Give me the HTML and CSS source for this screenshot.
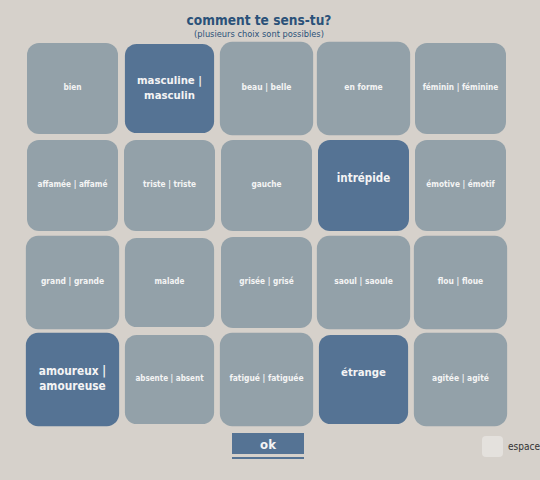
FILE: index.html
```html
<!DOCTYPE html>
<html lang="fr">
<head>
<meta charset="utf-8">
<title>comment te sens-tu?</title>
<link rel="stylesheet" href="styles.css">
</head>
<body>
<div class="page">
  <header class="head">
    <h1 class="title">comment te sens-tu?</h1>
    <p class="subtitle">(plusieurs choix sont possibles)</p>
  </header>
  <div class="grid">
    <div class="card">bien</div>
    <div class="card sel sm">masculine |<br>masculin</div>
    <div class="card lg">beau | belle</div>
    <div class="card lg">en forme</div>
    <div class="card">féminin | féminine</div>

    <div class="card">affamée | affamé</div>
    <div class="card">triste | triste</div>
    <div class="card">gauche</div>
    <div class="card sel single">intrépide</div>
    <div class="card">émotive | émotif</div>

    <div class="card lg">grand | grande</div>
    <div class="card sm">malade</div>
    <div class="card">grisée | grisé</div>
    <div class="card lg">saoul | saoule</div>
    <div class="card lg">flou | floue</div>

    <div class="card sel lg">amoureux |<br>amoureuse</div>
    <div class="card sm">absente | absent</div>
    <div class="card lg">fatigué | fatiguée</div>
    <div class="card sel sm single">étrange</div>
    <div class="card lg">agitée | agité</div>
  </div>
  <div class="footer">
    <div class="ok-wrap">
      <button class="ok" type="button">ok</button>
      <div class="ok-line"></div>
    </div>
    <label class="option"><span class="box"></span><span class="option-label">espacement</span></label>
  </div>
</div>
</body>
</html>
```
FILE: styles.css
```css
html, body {
  margin: 0;
  padding: 0;
  overflow: hidden;
}
body {
  background: #d6d1cb;
  font-family: "DejaVu Sans Condensed", "DejaVu Sans", Verdana, sans-serif;
  font-stretch: condensed;
  width: 540px;
  height: 480px;
}
.page {
  display: flex;
  flex-direction: column;
  padding-top: 13px;
}
.head {
  text-align: center;
  padding-right: 22px;
  height: 30px;
}
.title {
  margin: 0;
  font-size: 13.6px;
  line-height: 14px;
  font-weight: bold;
  color: #2b5179;
}
.subtitle {
  margin: 2px 0 0;
  font-size: 9.2px;
  line-height: 10px;
  color: #2b5179;
}
.grid {
  display: grid;
  grid-template-columns: repeat(5, 91px);
  grid-auto-rows: 91px;
  column-gap: 6px;
  row-gap: 6px;
  margin-left: 27px;
}
.card {
  box-sizing: border-box;
  background: #93a1a9;
  border-radius: 12px;
  color: #f4f4f4;
  font-weight: bold;
  font-size: 8.2px;
  display: flex;
  align-items: center;
  justify-content: center;
  text-align: center;
  line-height: 14px;
  padding-bottom: 3px;
}
.card.sel {
  background: #557394;
  font-size: 11.5px;
  line-height: 15px;
  padding-bottom: 1px;
}
.card.single {
  padding-bottom: 14px;
}
.card.lg {
  transform: scale(1.025);
}
.card.sm {
  transform: scale(0.98);
}
.footer {
  display: flex;
  align-items: flex-start;
  margin-top: 8px;
}
.ok-wrap {
  flex-shrink: 0;
  display: flex;
  flex-direction: column;
  gap: 3px;
  margin-left: 232px;
  width: 72px;
}
.ok {
  width: 72px;
  height: 21px;
  padding: 0;
  border: 0;
  background: #557394;
  color: #f4f4f4;
  font-family: "DejaVu Sans Condensed", "DejaVu Sans", Verdana, sans-serif;
  font-stretch: condensed;
  font-weight: bold;
  font-size: 13px;
  line-height: 24px;
}
.ok-line {
  height: 2px;
  background: #557394;
}
.option {
  flex-shrink: 0;
  display: flex;
  align-items: center;
  margin-left: 178px;
  margin-top: 3px;
  gap: 5px;
  white-space: nowrap;
}
.box {
  flex-shrink: 0;
  width: 21px;
  height: 21px;
  border-radius: 4px;
  background: #e4e1dd;
}
.option-label {
  font-size: 10px;
  color: #333333;
}
```
